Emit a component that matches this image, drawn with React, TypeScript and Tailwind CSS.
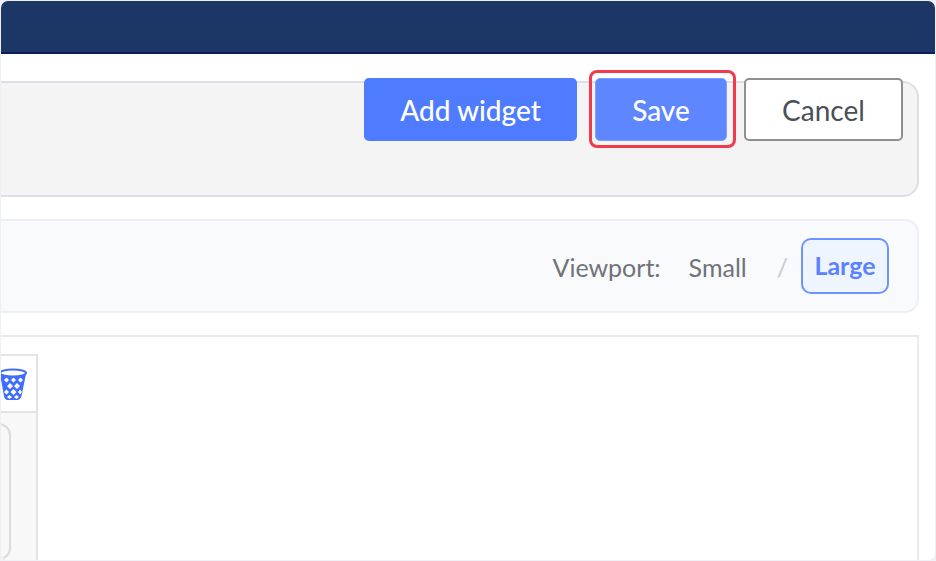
const FONT = "font-['Lato','Open_Sans',sans-serif]";

function TrashIcon() {
  return (
    <svg width="34" height="34" viewBox="0 0 34 34" fill="none" className="shrink-0">
      <defs>
        <clipPath id="bin">
          <path d="M4 7 L8 29 Q8.5 33 12 33 H21 Q24.5 33 25.5 29 L30 7 Z" />
        </clipPath>
      </defs>
      <g clipPath="url(#bin)">
        <rect x="0" y="0" width="34" height="34" fill="#3f6dff" />
        <path d="M8 13 l2.5 -2.5 2.5 2.5 -2.5 2.5 Z M15 13 l2.5 -2.5 2.5 2.5 -2.5 2.5 Z M22 13 l2.5 -2.5 2.5 2.5 -2.5 2.5 Z" fill="#fff" />
        <path d="M11 19 l3 -3 3 3 -3 3 Z M18 19 l3 -3 3 3 -3 3 Z" fill="#fff" />
        <path d="M8 25 l2.5 -2.5 2.5 2.5 -2.5 2.5 Z M14.500 25 l3 -3 3 3 -3 3 Z M22 25 l2 -2.500 2 2.500 -2 2.500 Z" fill="#fff" />
        <path d="M11 30 l2.500 -2 2.500 2 -2.500 2 Z M18 30 l2.500 -2 2.500 2 -2.500 2 Z" fill="#fff" />
      </g>
      <ellipse cx="17" cy="6" rx="13" ry="3.5" fill="#fff" stroke="#3f6dff" strokeWidth="2.2" />
    </svg>
  );
}

export default function App() {
  return (
    <div className={`${FONT} w-[936px] h-[561px] bg-[#eff0f3] pl-px pt-px overflow-hidden`}>
      <div className="w-[934px] h-[559px] rounded-[7px] overflow-hidden bg-white flex flex-col">
        {/* Barra superior */}
        <div className="h-[53px] shrink-0 bg-[#1c3765] border-b-2 border-[#0a1f5a]" />

        <div className="-ml-5 mr-[16px] flex-1 flex flex-col">
          {/* Acciones */}
          <div className="mt-[27px] h-[116px] shrink-0 bg-[#f4f4f4] border-2 border-[#dcdfe5] rounded-[16px] flex justify-end items-start gap-[18px] pr-[14px]">
            <button className="-mt-[5px] w-[213px] h-[63px] rounded-[5px] bg-[#4f7cff] text-white text-[28px] font-medium">
              Add widget
            </button>
            <div className="relative -mt-[5px]">
              <button className="block w-[132px] h-[63px] rounded-[5px] bg-[#5d86ff] border border-[#7f9fff] text-white text-[28px] font-medium">
                Save
              </button>
              <span className="absolute -left-[6px] -right-[9px] -top-[8px] -bottom-[7px] border-[3px] border-[#f23a4c] rounded-[8px]" />
            </div>
            <button className="-ml-px -mt-[5px] w-[159px] h-[63px] rounded-[5px] bg-white border-2 border-[#8f8f8f] text-[#4b4f58] text-[28px]">
              Cancel
            </button>
          </div>

          {/* Viewport */}
          <div className="mt-[22px] h-[94px] shrink-0 bg-[#f9fafc] border-2 border-[#eeeff2] rounded-[14px] flex items-center justify-end pr-[28px] text-[25px] text-[#6f7378]">
            <span className="pt-[4px]">Viewport:</span>
            <span className="ml-[28px] pt-[4px]">Small</span>
            <span className="ml-[30px] pt-[4px] text-[#c9cbcf]">/</span>
            <button className="ml-[13px] w-[88px] h-[56px] rounded-[10px] bg-[#eff5ff] border-2 border-[#6d93ff] text-[#5b83ff] font-bold text-[25px]">
              Large
            </button>
          </div>

          {/* Lienzo */}
          <div className="mt-[22px] flex-1 min-h-0 bg-white border-2 border-[#eaeaea] border-b-0 pt-[17px] overflow-hidden">
            <div className="w-[55px] h-full border-r-2 border-[#e4e4e4] flex flex-col">
              <div className="h-[59px] shrink-0 border-y-2 border-[#e4e4e4] flex items-center justify-end pr-[6px]">
                <TrashIcon />
              </div>
              <div className="flex-1 bg-[#f8f8f8] pt-[10px] pr-[25px]">
                <div className="h-full bg-[#f8f8f8] border-2 border-[#dcdcdc] rounded-[12px]" />
              </div>
            </div>
          </div>
        </div>
      </div>
    </div>
  );
}
